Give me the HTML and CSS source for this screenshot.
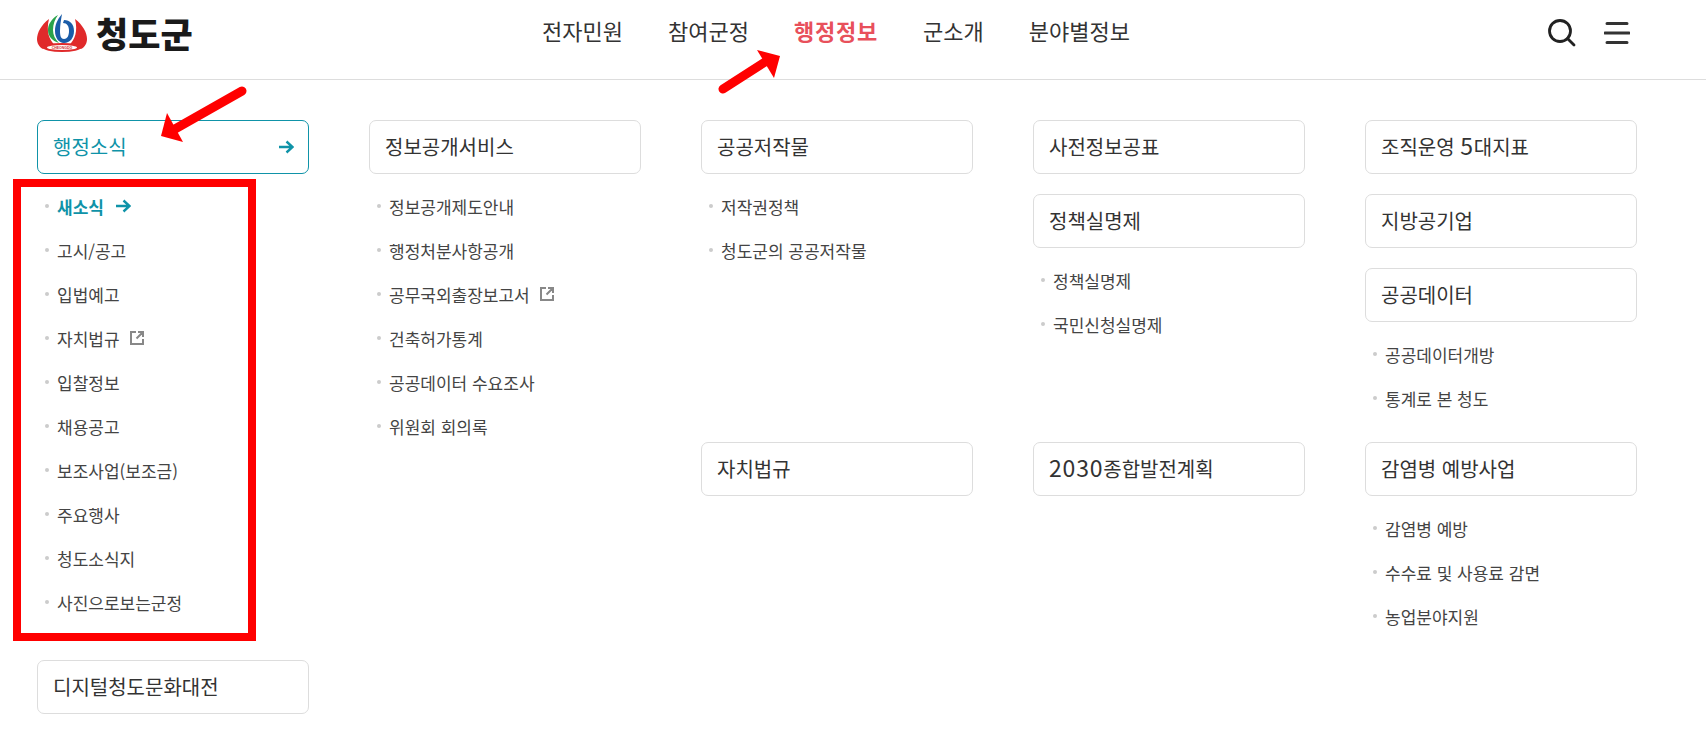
FILE: index.html
```html
<!DOCTYPE html>
<html lang="ko">
<head>
<meta charset="utf-8">
<title>청도군 행정정보</title>
<link rel="stylesheet" href="styles.css">
</head>
<body>
<header class="site-header">
  <a class="logo" href="#">
    <svg class="logo-mark" width="50" height="38" viewBox="0 0 50 38">
      <path d="M12 5C4 11 0 19 0 25C0 29 2 33 6 35L18 31C12 26 9 17 12 5Z" fill="#e02a2b"/>
      <path d="M38 5C46 11 50 19 50 25C50 29 48 33 44 35L32 31C38 26 41 17 38 5Z" fill="#e02a2b"/>
      <ellipse cx="25" cy="33.500" rx="19" ry="4.500" fill="#e02a2b"/>
      <ellipse cx="25" cy="33.500" rx="15" ry="2.600" fill="#fff"/>
      <text x="25" y="35" class="logo-tiny" text-anchor="middle">CHEONGDO</text>
      <path d="M21 1C14 5 11 11 11 16C11 22 15 27 22 29C18 25 16 21 16 16C16 10 18 5 21 1Z" fill="#2aa24a"/>
      <path d="M25 0C20 6 18 11 18 17C18 24 22 29 27 29C33 29 37 24 37 17C37 10 33 6 27 6L26 9C30 9 32 12 32 17C32 22 30 25 27 25C24 25 23 22 23 17C23 11 24 6 25 0Z" fill="#1a5ca8"/>
    </svg>
    <span class="logo-text">청도군</span>
  </a>
  <nav class="gnb">
    <a href="#">전자민원</a>
    <a href="#">참여군정</a>
    <a href="#" class="is-active">행정정보</a>
    <a href="#">군소개</a>
    <a href="#">분야별정보</a>
  </nav>
  <div class="tools">
    <svg width="30" height="30" viewBox="0 0 30 30" class="ic-search">
      <circle cx="13" cy="13" r="10.500" fill="none" stroke="#222" stroke-width="2.800"/>
      <path d="M20.500 20.500L27 27" stroke="#222" stroke-width="2.800" stroke-linecap="round"/>
    </svg>
    <svg width="26" height="24" viewBox="0 0 26 24" class="ic-menu">
      <path d="M3 2.500H23M1 12H25M3 21.500H23" stroke="#333" stroke-width="3" stroke-linecap="round"/>
    </svg>
  </div>
</header>

<main class="sitemap">
  <section class="cell c1 r12">
    <a class="box is-current" href="#">행정소식
      <svg width="16" height="14" viewBox="0 0 16 14"><path d="M1 7H14M8.500 1.500L14.500 7L8.500 12.500" fill="none" stroke="#0f93a8" stroke-width="2.400"/></svg>
    </a>
    <ul class="links">
      <li class="is-current"><a href="#">새소식</a>
        <svg width="16" height="14" viewBox="0 0 16 14"><path d="M1 7H14M8.500 1.500L14.500 7L8.500 12.500" fill="none" stroke="#0f93a8" stroke-width="2.400"/></svg>
      </li>
      <li><a href="#">고시/공고</a></li>
      <li><a href="#">입법예고</a></li>
      <li><a href="#">자치법규</a>
        <svg class="ext" width="14" height="14" viewBox="0 0 14 14"><path d="M6 1H1V13H13V8M8 1H13V6M13 1L6.500 7.500" fill="none" stroke="#888" stroke-width="2"/></svg>
      </li>
      <li><a href="#">입찰정보</a></li>
      <li><a href="#">채용공고</a></li>
      <li><a href="#">보조사업(보조금)</a></li>
      <li><a href="#">주요행사</a></li>
      <li><a href="#">청도소식지</a></li>
      <li><a href="#">사진으로보는군정</a></li>
    </ul>
  </section>
  <section class="cell c1 r3">
    <a class="box" href="#">디지털청도문화대전</a>
  </section>

  <section class="cell c2 r1">
    <a class="box" href="#">정보공개서비스</a>
    <ul class="links">
      <li><a href="#">정보공개제도안내</a></li>
      <li><a href="#">행정처분사항공개</a></li>
      <li><a href="#">공무국외출장보고서</a>
        <svg class="ext" width="14" height="14" viewBox="0 0 14 14"><path d="M6 1H1V13H13V8M8 1H13V6M13 1L6.500 7.500" fill="none" stroke="#888" stroke-width="2"/></svg>
      </li>
      <li><a href="#">건축허가통계</a></li>
      <li><a href="#">공공데이터 수요조사</a></li>
      <li><a href="#">위원회 회의록</a></li>
    </ul>
  </section>

  <section class="cell c3 r1">
    <a class="box" href="#">공공저작물</a>
    <ul class="links">
      <li><a href="#">저작권정책</a></li>
      <li><a href="#">청도군의 공공저작물</a></li>
    </ul>
  </section>
  <section class="cell c3 r2">
    <a class="box" href="#">자치법규</a>
  </section>

  <section class="cell c4 r1">
    <a class="box" href="#">사전정보공표</a>
    <div class="group">
      <a class="box" href="#">정책실명제</a>
      <ul class="links">
        <li><a href="#">정책실명제</a></li>
        <li><a href="#">국민신청실명제</a></li>
      </ul>
    </div>
  </section>
  <section class="cell c4 r2">
    <a class="box" href="#"><span><span class="num">2030</span>종합발전계획</span></a>
  </section>

  <section class="cell c5 r1">
    <a class="box" href="#"><span>조직운영 <span class="num">5</span>대지표</span></a>
    <a class="box" href="#">지방공기업</a>
    <div class="group">
      <a class="box" href="#">공공데이터</a>
      <ul class="links">
        <li><a href="#">공공데이터개방</a></li>
        <li><a href="#">통계로 본 청도</a></li>
      </ul>
    </div>
  </section>
  <section class="cell c5 r2">
    <a class="box" href="#">감염병 예방사업</a>
    <ul class="links">
      <li><a href="#">감염병 예방</a></li>
      <li><a href="#">수수료 및 사용료 감면</a></li>
      <li><a href="#">농업분야지원</a></li>
    </ul>
  </section>
</main>

<div class="mark-rect"></div>
<svg class="mark-arrows" width="1706" height="729" viewBox="0 0 1706 729">
  <path d="M723 89L765 62" stroke="#f00" stroke-width="9" stroke-linecap="round"/>
  <polygon points="757,50 780,56 774,78" fill="#f00"/>
  <path d="M242 91L175 129" stroke="#f00" stroke-width="9" stroke-linecap="round"/>
  <polygon points="161,136 167,113 183,142" fill="#f00"/>
</svg>
</body>
</html>
```
FILE: styles.css
```css
* { box-sizing: border-box; }
html, body { margin: 0; padding: 0; }
body {
  background: #fff;
  color: #333;
  font-family: "Noto Sans CJK KR", "Noto Sans", sans-serif;
  height: 729px;
  overflow: hidden;
  position: relative;
}
a { color: inherit; text-decoration: none; }
ul { list-style: none; margin: 0; padding: 0; }

.site-header {
  display: flex;
  align-items: center;
  height: 80px;
  padding: 0 76px 14px 37px;
  border-bottom: 1px solid #ddd;
}
.logo { display: flex; align-items: center; gap: 9px; width: 153px; flex: none; }
.logo-mark { display: block; flex: none; }
.logo-tiny { font-size: 3.500px; fill: #d02a2b; font-family: "Liberation Sans", sans-serif; font-weight: 700; }
.logo-text { font-size: 35px; line-height: 36px; font-weight: 900; color: #1a1a1a; white-space: nowrap; }

.gnb { display: flex; gap: 45px; margin-left: 352px; margin-bottom: 6px; font-size: 22px; line-height: 32px; color: #333; }
.gnb .is-active { color: #e8505b; font-weight: 700; letter-spacing: 0.8px; }

.tools { display: flex; align-items: center; gap: 27px; margin-left: auto; }
.ic-search, .ic-menu { display: block; }

.sitemap {
  display: grid;
  grid-template-columns: repeat(5, 272px);
  grid-template-rows: 322px 218px auto;
  column-gap: 60px;
  padding: 40px 37px 0;
}
.cell { display: flex; flex-direction: column; gap: 20px; align-items: stretch; min-width: 0; }
.cell > .links, .group > .links { margin-top: -10px; }
.group { display: flex; flex-direction: column; gap: 20px; }
.c1 { grid-column: 1; }
.c2 { grid-column: 2; }
.c3 { grid-column: 3; }
.c4 { grid-column: 4; }
.c5 { grid-column: 5; }
.r1 { grid-row: 1; }
.r2 { grid-row: 2; }
.r3 { grid-row: 3; }
.r12 { grid-row: 1 / span 2; }

.box {
  display: flex;
  flex: none;
  align-items: center;
  justify-content: space-between;
  height: 54px;
  padding: 0 14px 0 15px;
  border: 1px solid #ddd;
  border-radius: 7px;
  font-size: 20px;
  line-height: 30px;
  color: #333;
  background: #fff;
}
.box.is-current { color: #0f93a8; border-color: #0f93a8; }
.num { font-size: 23px; letter-spacing: 0.8px; line-height: 1; }

.links { flex: none; }
.links li {
  display: flex;
  align-items: center;
  height: 44px;
  padding-left: 8px;
  font-size: 17px;
  color: #444;
}
.links li::before {
  content: "";
  width: 4px;
  height: 4px;
  margin-right: 8px;
  border-radius: 50%;
  background: #ccc;
  flex: none;
}
.links li svg { margin-left: 11px; flex: none; }
.links li svg.ext { margin-left: 10px; }
.links li.is-current { color: #0f93a8; font-weight: 700; }

.mark-rect {
  position: absolute;
  left: 13px;
  top: 179px;
  width: 243px;
  height: 462px;
  border: 8px solid #f00;
  pointer-events: none;
}
.mark-arrows { position: absolute; left: 0; top: 0; pointer-events: none; }
```
